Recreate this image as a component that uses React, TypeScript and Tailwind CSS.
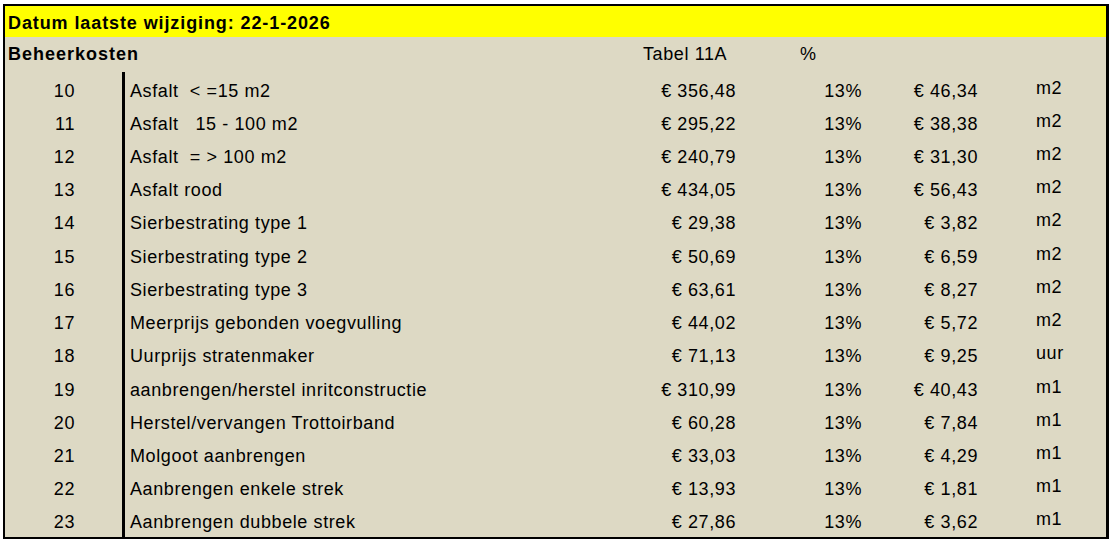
import React from "react";

type Row = {
  nr: number;
  omschrijving: string;
  prijs: string;
  perc: string;
  bedrag: string;
  eenheid: string;
};

const ROWS: Row[] = [
  { nr: 10, omschrijving: "Asfalt\u00a0 < =15 m2", prijs: "€ 356,48", perc: "13%", bedrag: "€ 46,34", eenheid: "m2" },
  { nr: 11, omschrijving: "Asfalt\u00a0\u00a0 15 - 100 m2", prijs: "€ 295,22", perc: "13%", bedrag: "€ 38,38", eenheid: "m2" },
  { nr: 12, omschrijving: "Asfalt\u00a0 = > 100 m2", prijs: "€ 240,79", perc: "13%", bedrag: "€ 31,30", eenheid: "m2" },
  { nr: 13, omschrijving: "Asfalt rood", prijs: "€ 434,05", perc: "13%", bedrag: "€ 56,43", eenheid: "m2" },
  { nr: 14, omschrijving: "Sierbestrating type 1", prijs: "€ 29,38", perc: "13%", bedrag: "€ 3,82", eenheid: "m2" },
  { nr: 15, omschrijving: "Sierbestrating type 2", prijs: "€ 50,69", perc: "13%", bedrag: "€ 6,59", eenheid: "m2" },
  { nr: 16, omschrijving: "Sierbestrating type 3", prijs: "€ 63,61", perc: "13%", bedrag: "€ 8,27", eenheid: "m2" },
  { nr: 17, omschrijving: "Meerprijs gebonden voegvulling", prijs: "€ 44,02", perc: "13%", bedrag: "€ 5,72", eenheid: "m2" },
  { nr: 18, omschrijving: "Uurprijs stratenmaker", prijs: "€ 71,13", perc: "13%", bedrag: "€ 9,25", eenheid: "uur" },
  { nr: 19, omschrijving: "aanbrengen/herstel inritconstructie", prijs: "€ 310,99", perc: "13%", bedrag: "€ 40,43", eenheid: "m1" },
  { nr: 20, omschrijving: "Herstel/vervangen Trottoirband", prijs: "€ 60,28", perc: "13%", bedrag: "€ 7,84", eenheid: "m1" },
  { nr: 21, omschrijving: "Molgoot aanbrengen", prijs: "€ 33,03", perc: "13%", bedrag: "€ 4,29", eenheid: "m1" },
  { nr: 22, omschrijving: "Aanbrengen enkele strek", prijs: "€ 13,93", perc: "13%", bedrag: "€ 1,81", eenheid: "m1" },
  { nr: 23, omschrijving: "Aanbrengen dubbele strek", prijs: "€ 27,86", perc: "13%", bedrag: "€ 3,62", eenheid: "m1" },
];

export default function App() {
  return (
    <div className="w-[1112px] h-[540px] bg-white pl-[3px] pt-[4px] font-['Liberation_Sans',Arial,sans-serif] text-black">
      <div className="w-[1106px] h-[535px] border-t-2 border-b-2 border-l-2 border-r-[3px] border-black bg-[#ddd9c4] flex flex-col">
        {/* kop */}
        <div className="h-[31px] bg-[#ffff00] flex items-center pl-[3px] pt-[3px] text-[18px] font-bold tracking-[0.9px]">
          Datum laatste wijziging: 22-1-2026
        </div>

        <div className="h-[35px] flex items-center text-[18px]">
          <div className="w-[638px] pl-[3px] font-bold tracking-[1px]">Beheerkosten</div>
          <div className="w-[157px] tracking-[0.6px]">Tabel 11A</div>
          <div>%</div>
        </div>

        <div className="flex-1 flex flex-col text-[18px] tracking-[0.6px]">
          {ROWS.map((r) => (
            <div key={r.nr} className="flex-1 flex items-center">
              <div className="w-[117px] text-right pr-[47px] pt-[5px]">{r.nr}</div>
              <div className="w-[478px] h-full flex items-center border-l-[3px] border-black pl-[5px] pt-[5px] whitespace-pre">
                {r.omschrijving}
              </div>
              <div className="w-[140px] text-right pr-[4px] pt-[5px]">{r.prijs}</div>
              <div className="w-[126px] text-right pr-[4px] pt-[5px]">{r.perc}</div>
              <div className="w-[116px] text-right pr-[4px] pt-[5px]">{r.bedrag}</div>
              <div className="pl-[54px] pb-[1px]">{r.eenheid}</div>
            </div>
          ))}
        </div>
      </div>
    </div>
  );
}
